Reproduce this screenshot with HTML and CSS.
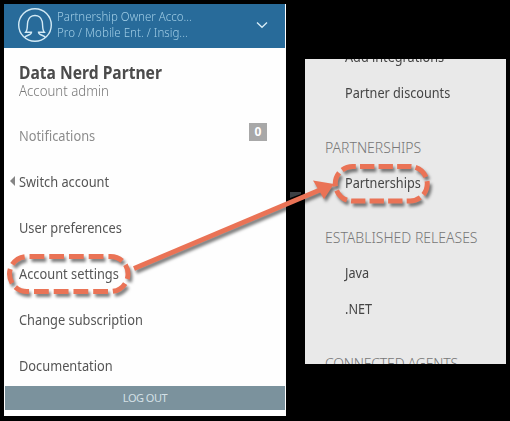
FILE: index.html
```
<!DOCTYPE html>
<html lang="en">
<head>
<meta charset="utf-8">
<title>Account settings</title>
<link rel="stylesheet" href="styles.css">
</head>
<body>
<main class="stage">
  <section class="menu">
    <header class="account">
      <svg class="avatar" width="36" height="36" viewBox="0 0 36 36" fill="none" stroke="#d3eaf5" stroke-width="1.4">
        <circle cx="18" cy="18" r="16.3"/>
        <path d="M7.500 30.500C9 27.800 14.500 28.500 14.500 25.200H8.700C11 22.500 10 18 10.800 14.500C11.800 10.500 14.500 8.500 18 8.500S24.200 10.500 25.200 14.500C26 18 25 22.500 27.300 25.200H21.500C21.500 28.500 27 27.800 28.500 30.500"/>
      </svg>
      <div class="account-text"><div class="owner">Partnership Owner Acco...</div><div class="plan">Pro / Mobile Ent. / Insig...</div></div>
      <svg class="chevron" width="12" height="8" viewBox="0 0 12 8" fill="none" stroke="#d8edf7" stroke-width="1.3"><path d="M1 1.500L6 6.300L11 1.500"/></svg>
    </header>
    <div class="profile">
      <h1>Data Nerd Partner</h1>
      <p>Account admin</p>
    </div>
    <nav class="links">
      <div class="link muted"><span class="label">Notifications</span><span class="count">0</span></div>
      <div class="link switch"><svg class="caret" width="5" height="10" viewBox="0 0 5 10"><path d="M5 0V10L0 5Z" fill="#858585"/></svg><span class="label">Switch account</span></div>
      <div class="link"><span class="label">User preferences</span></div>
      <div class="link"><span class="label">Account settings</span></div>
      <div class="link"><span class="label">Change subscription</span></div>
      <div class="link"><span class="label">Documentation</span></div>
    </nav>
    <footer class="logout">LOG OUT</footer>
  </section>
  <section class="panel">
    <div class="item"><span class="label">Add integrations</span></div>
    <div class="item"><span class="label">Partner discounts</span></div>
    <div class="title">PARTNERSHIPS</div>
    <div class="item"><span class="label">Partnerships</span></div>
    <div class="title">ESTABLISHED RELEASES</div>
    <div class="item"><span class="label">Java</span></div>
    <div class="item"><span class="label">.NET</span></div>
    <div class="title connected">CONNECTED AGENTS</div>
  </section>
  <svg class="callout" width="510" height="421" viewBox="0 0 510 421" fill="none" stroke="#ea7356" stroke-width="5">
    <path d="M290 192h11v2l-11 4z" fill="#3c4044" stroke="none"/>
    <g class="marks">
      <path pathLength="280" stroke-dasharray="15 5" d="M29.500 256.500H110.500A17.500 17.500 0 0 1 110.500 291.500H27A17.500 17.500 0 0 1 27 256.500Z"/>
      <path pathLength="240" stroke-dasharray="15.500 4.500" d="M360 166.500H410A17.250 17.250 0 0 1 410 201H352.500A17.250 17.250 0 0 1 352.500 166.500Z"/>
      <path d="M134 268.500L321 189.500"/>
      <path d="M313 180.500L334 184L324 199Z" fill="#ea7356" stroke="none"/>
    </g>
  </svg>
</main>
</body>
</html>
```
FILE: styles.css
```
* { box-sizing: border-box; }
body { margin: 0; background: #000; font-family: "Noto Sans", sans-serif; }
h1, p { margin: 0; }
.stage {
  position: relative;
  display: flex;
  align-items: flex-start;
  gap: 19px;
  width: 510px;
  height: 421px;
  padding: 4px 0 0 4px;
  overflow: hidden;
  background: #000;
  white-space: nowrap;
}
.menu { width: 282px; height: 412px; background: #fefefe; color: #555; }
.account {
  display: flex;
  align-items: center;
  width: 281px;
  height: 44px;
  padding: 0 17px 3px 13px;
  background: #286b9a;
  color: #9fcce5;
}
.account-text { margin-left: 4px; font-size: 12px; line-height: 16px; font-weight: 300; }
.owner, .plan, h1, .profile p, .label { transform-origin: left center; }
.owner { transform: scaleX(.957); }
.plan { transform: scaleX(.965); }
.chevron { margin-left: auto; }
.profile { height: 65px; padding: 14px 0 0 15px; }
h1 { font-size: 18px; line-height: 21px; color: #4b4b4b; transform: scaleX(.868); }
.profile p { font-size: 14px; line-height: 16px; color: #777; font-weight: 300; transform: scaleX(.945); }
.link {
  display: flex;
  align-items: center;
  height: 46px;
  padding: 0 19px 2px 15px;
  font-size: 14px;
}
.label { display: inline-block; transform: scaleX(.915); }
.muted { color: #8c8c8c; }
.switch { padding-left: 6px; }
.caret { margin-right: 4px; }
.count {
  width: 18px;
  height: 18px;
  margin: -7px 0 0 auto;
  background: #a8a8a8;
  color: #fff;
  font-size: 12px;
  font-weight: 700;
  line-height: 17px;
  text-align: center;
}
.logout {
  width: 280px;
  height: 24px;
  margin-left: 1px;
  margin-top: -3px;
  background: #7b929d;
  color: #d4e0e6;
  font-size: 11px;
  letter-spacing: -.5px;
  line-height: 23px;
  text-align: center;
}
.panel {
  width: 201px;
  height: 305px;
  margin-top: 55px;
  padding-left: 20px;
  overflow: hidden;
  background: #e9e9e9;
  color: #454545;
  font-size: 14px;
}
.item { height: 36px; padding-left: 20px; line-height: 36px; }
.item:first-child { margin-top: -20px; }
.item .label { transform: scaleX(.905); }
.title { height: 36px; margin-top: 18px; line-height: 37px; color: #777; font-weight: 300; }
.connected { letter-spacing: -.2px; }
.callout { position: absolute; left: 0; top: 0; }
.marks { filter: drop-shadow(2px 3px 1.500px rgba(0, 0, 0, .5)); }
```
